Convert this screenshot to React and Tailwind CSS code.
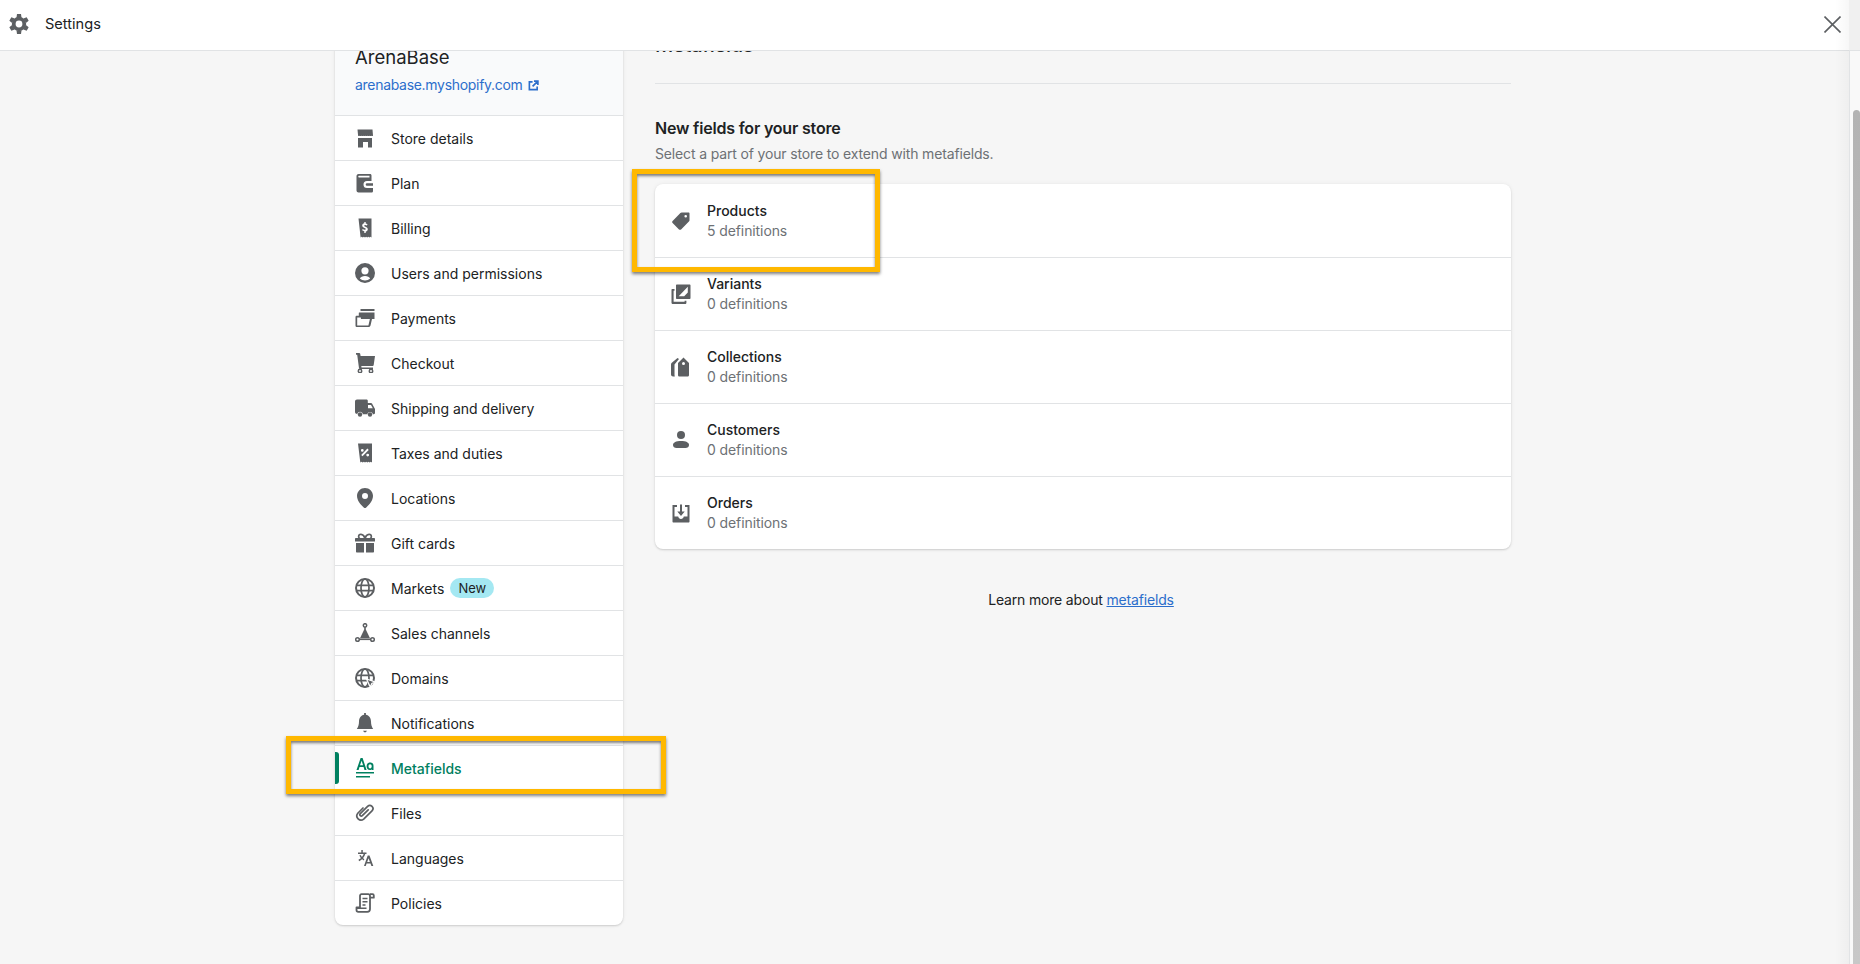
const ICONS = {
  gear: (
    <>
      <circle cx="10" cy="10" r="5.300" fill="none" stroke="currentColor" strokeWidth="3.800" />
      <path d="M8 0h4l.5 3.500h-5zM8 20h4l.5-3.500h-5z" />
      <path d="M8 0h4l.5 3.500h-5zM8 20h4l.5-3.500h-5z" transform="rotate(60 10 10)" />
      <path d="M8 0h4l.5 3.500h-5zM8 20h4l.5-3.500h-5z" transform="rotate(120 10 10)" />
    </>
  ),
  store: (
    <>
      <path d="M2.500 1.500h15l.5 6.200c-.6.5-1.100.5-1.600 0-.6.5-1.300.5-1.900 0-.6.5-1.300.5-1.900 0-.7.5-1.400.5-2.100 0-.7.5-1.300.5-2 0-.6.5-1.300.5-1.900 0-.6.5-1.200.5-1.900 0-.5.5-1 .5-1.600 0z" />
      <path d="M3 10h14v9.500h-4V14H8v5.500H3z" />
    </>
  ),
  wallet: (
    <path fillRule="evenodd" d="M3.500 1H15c1 0 1.500.7 1.500 1.600V8H12a3.500 3.500 0 0 0 0 7h6v3c0 1-.7 1.500-1.500 1.500h-13c-1 0-2-.8-2-2V3c0-1.200 1-2 2-2zM4 2.800c-1 0-1 1.800 0 1.800h10.500V2.800zM12 10.200h6v2.600h-6a1.300 1.300 0 0 1 0-2.600z" />
  ),
  billing: (
    <path fillRule="evenodd" d="M3.500.5h13v19l-1.100-.8-1 .8-1.100-.8-1.100.8-1.100-.8-1.100.8-1.100-.8-1.100.8-1.100-.8-1.100.8zM9.300 4v1.200C8 5.500 7.200 6.400 7.200 7.500c0 1.300 1 2 2.300 2.400 1 .3 1.300.6 1.300 1 0 .5-.5.8-1.100.8-.7 0-1.400-.3-2-.7l-.6 1.300c.6.5 1.300.8 2.200.9V15h1.400v-1.300c1.300-.3 2.100-1.200 2.100-2.400 0-1.300-.9-2-2.300-2.500-1-.3-1.300-.6-1.300-1s.4-.7 1-.7 1.200.2 1.700.5l.6-1.300c-.6-.4-1.200-.6-1.800-.7V4z" />
  ),
  user: (
    <path fillRule="evenodd" d="M10 0a10 10 0 1 1 0 20 10 10 0 0 1 0-20zm0 4.200a3.600 3.600 0 1 0 0 7.200 3.600 3.600 0 0 0 0-7.200zm0 8.800c-2.500 0-4.400 1-5.200 2.600A7.600 7.600 0 0 0 10 17.600a7.600 7.600 0 0 0 5.200-2c-.8-1.600-2.700-2.600-5.200-2.600z" />
  ),
  payments: (
    <>
      <path d="M5.500 1h14v2h-14z" />
      <path fillRule="evenodd" d="M4 4.500h15.500v6.500H17l-1.500 6.500c-.2.9-1 1.500-1.800 1.500H2c-.9 0-1.500-.7-1.500-1.600V9.200C.5 8.300 1 7.800 2 7.800h1.800V5.500c0-.6.100-1 .2-1zM2.200 9.500v8h11.200l1.500-6.500h-9V9.500z" />
    </>
  ),
  cart: (
    <>
      <path d="M1 0h3.200c.5 0 .9.3 1 .8L5.600 3H20l-1.300 9c-.1.5-.5.9-1 .9H6.300l.2 1.500H18v1.700H5c-.5 0-.9-.3-1-.8L2.200 1.700H1z" />
      <circle cx="5" cy="18" r="1.700" fill="none" stroke="currentColor" strokeWidth="1.500" />
      <circle cx="16" cy="18" r="1.700" fill="none" stroke="currentColor" strokeWidth="1.500" />
    </>
  ),
  truck: (
    <>
      <path fillRule="evenodd" d="M2 1.500h9.500c.8 0 1.300.6 1.300 1.300V5H16c.5 0 .8.2 1 .6l3 5.400V15c0 .7-.5 1.200-1.200 1.200H18a3 3 0 0 0-5.800 0H8A3 3 0 0 0 2.200 16C1 16 0 15.200 0 14V3.500c0-1.200.9-2 2-2zM13 7v3.300h4.800L16 7z" />
      <circle cx="5" cy="16.500" r="2.200" />
      <circle cx="15" cy="16.500" r="2.200" />
    </>
  ),
  taxes: (
    <path fillRule="evenodd" d="M3 .5h14v19l-1.200-.8-1.100.8-1.200-.8-1.100.8-1.200-.8-1.200.8-1.100-.8-1.200.8-1.200-.8-1.200.8zM12.400 5.600 6.200 12l1.300 1.300 6.200-6.400zM7.300 6a1.400 1.400 0 1 0 0 2.800 1.400 1.400 0 0 0 0-2.800zm5.400 4.700a1.400 1.400 0 1 0 0 2.800 1.400 1.400 0 0 0 0-2.800z" />
  ),
  pin: (
    <path fillRule="evenodd" d="M10 0c4.400 0 8 3.400 8 7.800 0 4.700-3.800 9.300-7 11.900-.6.4-1.400.4-2 0-3.200-2.600-7-7.200-7-11.900C2 3.400 5.600 0 10 0zm0 5a3 3 0 1 0 0 6 3 3 0 0 0 0-6z" />
  ),
  gift: (
    <>
      <path fillRule="evenodd" d="M5.800.5c1.700 0 3.200.9 4.200 2.400C11 1.400 12.500.5 14.200.5c1.800 0 3 1.200 3 2.900 0 .6-.2 1.200-.5 1.600H19c.6 0 1 .4 1 1v2.500H0V6c0-.6.4-1 1-1h2.300c-.3-.4-.5-1-.5-1.600C2.800 1.700 4 .5 5.800.5zm0 1.700c-.8 0-1.300.5-1.300 1.200 0 .9.700 1.600 1.600 1.600h2.700c-.4-1.500-1.600-2.800-3-2.800zm8.400 0c-1.400 0-2.600 1.300-3 2.800h2.700c.9 0 1.600-.7 1.600-1.600 0-.7-.5-1.200-1.300-1.200z" />
      <path d="M1 10h8v9.500H2c-.6 0-1-.4-1-1zM11 10h8v8.500c0 .6-.4 1-1 1h-7z" />
    </>
  ),
  globe: (
    <>
      <circle cx="10" cy="10" r="9" fill="none" stroke="currentColor" strokeWidth="2" />
      <ellipse cx="10" cy="10" rx="4" ry="9" fill="none" stroke="currentColor" strokeWidth="1.700" />
      <path d="M1 6.600h18v1.700H1zM1 11.700h18v1.700H1z" />
    </>
  ),
  channels: (
    <>
      <circle cx="10" cy="2.400" r="1.700" fill="none" stroke="currentColor" strokeWidth="1.500" />
      <circle cx="2.500" cy="16.500" r="1.800" fill="none" stroke="currentColor" strokeWidth="1.500" />
      <circle cx="17.500" cy="16.500" r="1.800" fill="none" stroke="currentColor" strokeWidth="1.500" />
      <path d="M9.200 4h1.600v2.600L15 15.200h-10L9.200 6.600z" />
      <path d="M4 15.500h12v1.600H4z" />
    </>
  ),
  domains: (
    <>
      <circle cx="10" cy="10" r="9" fill="none" stroke="currentColor" strokeWidth="2" />
      <ellipse cx="10" cy="10" rx="4" ry="9" fill="none" stroke="currentColor" strokeWidth="1.700" />
      <path d="M1 6.600h18v1.700H1zM1 11.700h12v1.700H1z" />
      <path d="M11.500 11 20 14l-3.200 1.500-1.500 3.500z" stroke="#fff" strokeWidth="1.200" />
    </>
  ),
  bell: (
    <>
      <path d="M9.100 0h1.800v1.700C14 2.200 16 5 16 8.500c0 3.500.8 5.300 2.200 7.500H1.800C3.200 13.800 4 12 4 8.500 4 5 6 2.200 9.100 1.700z" />
      <path d="M8 17.800h4l-1.200 1.500H9.200z" />
    </>
  ),
  metafields: (
    <>
      <path fillRule="evenodd" d="M5.600 0h2l4 12H9.500l-.9-3H4.500l-.9 3H1.500zM6.600 2.700 5 7.300h3.100z" />
      <path fillRule="evenodd" d="M15 4.500c2.200 0 3.500 1.200 3.500 3.200V12h-1.700v-.8c-.5.600-1.200.9-2 .9-1.900 0-3.200-1.600-3.200-3.800s1.300-3.800 3.400-3.800zm.1 1.700c-1 0-1.600.8-1.600 2.100s.6 2.100 1.600 2.100 1.600-.8 1.600-2.100-.6-2.100-1.600-2.100z" />
      <path d="M1 14h18v1.600H1zM1 18h14v1.600H1z" />
    </>
  ),
  clip: (
    <path
      fill="none"
      stroke="currentColor"
      strokeWidth="1.700"
      strokeLinecap="round"
      d="M13.200 6.800 7.300 12.700a1.400 1.400 0 0 1-2-2L12.600 3.400a3.100 3.100 0 0 1 4.400 4.400L8.700 16.100a4.200 4.200 0 0 1-5.900-5.900L8 5"
    />
  ),
  languages: (
    <>
      <path d="M3 4.500h8.500v1.400H3zM6.300 2h1.500v2.600H6.300z" />
      <path fill="none" stroke="currentColor" strokeWidth="1.500" d="M9.800 5c-.8 3-3 5.800-6 7.500M5 7.300c.8 2 2.300 3.600 4 4.500" />
      <path fillRule="evenodd" d="M12.700 7.500h1.800l3.800 10.500h-1.900l-.9-2.600h-3.900l-.9 2.600H9zm.9 2.800-1.400 3.600h2.700z" />
    </>
  ),
  policies: (
    <>
      <path
        fill="none"
        stroke="currentColor"
        strokeWidth="1.800"
        strokeLinejoin="round"
        d="M15 15.500V3c0-1-.7-1.800-1.800-1.800H6.500C5.500 1.200 5 2 5 3v11.500H1.500v2.500c0 1 .8 1.800 1.800 1.800h9c1.500 0 2.700-1.200 2.700-2.800v-.5M15 1.200h2.500c.7 0 1.300.6 1.300 1.300v2.200H15"
      />
      <path d="M7.500 4.800h5v1.500h-5zM7.500 8h5v1.500h-5zM7.500 11.200h3v1.500h-3zM2 14.500h9.500v1.500H2z" />
    </>
  ),
  tag: (
    <path fillRule="evenodd" d="M18.500 2.500v6.800c0 .5-.2.900-.6 1.300l-7.800 7.800c-.6.600-1.500.6-2.100 0L1.600 12c-.6-.6-.6-1.500 0-2.100l7.800-7.800c.4-.4.800-.6 1.300-.6h6.800c.6 0 1 .4 1 1zM14.700 4a1.300 1.300 0 1 0 0 2.600 1.300 1.300 0 0 0 0-2.600z" />
  ),
  variants: (
    <>
      <path fillRule="evenodd" d="M6 .5h12.500c.6 0 1 .4 1 1V14c0 .6-.4 1-1 1H6c-.6 0-1-.4-1-1V1.500c0-.6.400-1 1-1zm10.800 2.200L7.700 12.300h5.500l3.600-3.800z" />
      <path d="M1 5h2.500v1.700h-.9v11h11v-1h1.800v2c0 .7-.5 1.300-1.300 1.300H2C1.200 20 .5 19.500.5 18.700V6c0-.6.200-1 .5-1z" />
    </>
  ),
  collections: (
    <>
      <path fillRule="evenodd" d="M12.500.5 18 6V18c0 1-.8 1.500-1.500 1.500h-8C7.800 19.500 7 19 7 18V6zm0 4.500a1.500 1.500 0 1 0 0 3 1.500 1.500 0 0 0 0-3z" />
      <path d="M6.500 1 8 2 3.500 7.500v10c0 .5.100 1 .3 2H2C1 19.500 0 18.500 0 17.500v-10c0-.6.200-1 .5-1.400z" />
    </>
  ),
  person: (
    <>
      <circle cx="10" cy="5" r="4" />
      <path d="M10 11c5 0 8 1.500 8 4 0 2-1.500 3-3.500 3h-9C3.500 18 2 17 2 15c0-2.500 3-4 8-4z" />
    </>
  ),
  orders: (
    <path fillRule="evenodd" d="M1.500 2h4.500v2H3.500v9.500h3.700c.3 1.500 1.400 2.500 2.800 2.500s2.500-1 2.800-2.500h3.700V4H14V2h4.500v16.500c0 .6-.4 1-1 1h-15c-.6 0-1-.4-1-1zM9 1.500h2v7h2.700L10 13 6.300 8.500H9z" />
  ),
};

function Icon({ name, className = "text-[#5c5f62]" }) {
  return (
    <svg viewBox="0 0 20 20" fill="currentColor" className={`w-5 h-5 shrink-0 ${className}`}>
      {ICONS[name]}
    </svg>
  );
}

const NAV = [
  { label: "Store details", icon: "store" },
  { label: "Plan", icon: "wallet" },
  { label: "Billing", icon: "billing" },
  { label: "Users and permissions", icon: "user" },
  { label: "Payments", icon: "payments" },
  { label: "Checkout", icon: "cart" },
  { label: "Shipping and delivery", icon: "truck" },
  { label: "Taxes and duties", icon: "taxes" },
  { label: "Locations", icon: "pin" },
  { label: "Gift cards", icon: "gift" },
  { label: "Markets", icon: "globe", badge: "New" },
  { label: "Sales channels", icon: "channels" },
  { label: "Domains", icon: "domains" },
  { label: "Notifications", icon: "bell" },
  { label: "Metafields", icon: "metafields", active: true },
  { label: "Files", icon: "clip" },
  { label: "Languages", icon: "languages" },
  { label: "Policies", icon: "policies" },
];

const FIELDS = [
  { label: "Products", count: "5 definitions", icon: "tag" },
  { label: "Variants", count: "0 definitions", icon: "variants" },
  { label: "Collections", count: "0 definitions", icon: "collections" },
  { label: "Customers", count: "0 definitions", icon: "person" },
  { label: "Orders", count: "0 definitions", icon: "orders" },
];

function NavRow({ item }) {
  return (
    <div className="relative flex items-center h-[45px] pl-5 gap-4 border-t border-[#e1e3e5]">
      {item.active && (
        <div className="absolute left-0 top-[6px] w-[4px] h-[32px] rounded-r-[3px] bg-[#008060]" />
      )}
      <Icon name={item.icon} className={item.active ? "text-[#008060]" : "text-[#5c5f62]"} />
      <span className={`pt-px ${item.active ? "font-medium text-[#008060]" : "text-[#202223]"}`}>
        {item.label}
      </span>
      {item.badge && (
        <span className="-ml-[10px] h-5 px-2 rounded-full bg-[#a4e8f2] text-[13px] leading-5 text-[#202223]">
          {item.badge}
        </span>
      )}
    </div>
  );
}

export default function App() {
  return (
    <div className="relative h-[964px] overflow-hidden flex flex-col bg-[#f6f6f6] text-sm text-[#202223] font-['Inter',sans-serif]">
      <header className="relative z-10 shrink-0 h-[51px] flex items-center justify-between bg-white border-b border-[#e1e3e5] pl-[9px] pr-[19px]">
        <div className="flex items-center gap-[16px] -mt-[2px]">
          <Icon name="gear" />
          <span className="text-[14.6px]">Settings</span>
        </div>
        <svg
          viewBox="0 0 17 17"
          className="w-[17px] h-[17px] -mt-[2px] text-[#5c5f62]"
          fill="none"
          stroke="currentColor"
          strokeWidth="1.600"
        >
          <path d="M.5.5l16 16M16.500.5l-16 16" />
        </svg>
      </header>

      <div className="flex-1 flex justify-between min-h-0">
        <main className="flex items-start gap-[32px] pl-[335px] -mt-[13px]">
          <aside className="w-[288px] shrink-0 bg-white rounded-b-lg shadow-[0_0_5px_rgba(23,24,24,0.05),0_1px_2px_rgba(0,0,0,0.15)]">
            <div className="h-[77px] pl-5 pt-[8px] bg-[#f9fafb]">
              <div className="text-[18.500px] leading-[22px]">ArenaBase</div>
              <a className="mt-[7px] flex items-center gap-[5px] text-[#2c6ecb] tracking-[-0.3px]">
                arenabase.myshopify.com
                <svg viewBox="0 0 12 12" className="w-[11px] h-[11px]" fill="none" stroke="currentColor" strokeWidth="1.800">
                  <path d="M5 2H1.500v8.500H10V7M6.500 1.200h4.300v4.300M10.500 1.500 5 7" />
                </svg>
              </a>
            </div>
            {NAV.map((item) => (
              <NavRow key={item.label} item={item} />
            ))}
          </aside>

          <section className="w-[856px] shrink-0">
            <div className="-mt-[5px] h-[51px] border-b border-[#e1e3e5] text-xl font-medium leading-6 tracking-[-0.25px]">
              Metafields
            </div>
            <h2 className="mt-[32px] text-base font-semibold leading-6 tracking-[-0.19px]">New fields for your store</h2>
            <p className="mt-[4px] text-[#6d7175] leading-5 tracking-[-0.15px]">
              Select a part of your store to extend with metafields.
            </p>
            <div className="mt-[20px] bg-white rounded-lg shadow-[0_0_5px_rgba(23,24,24,0.05),0_1px_2px_rgba(0,0,0,0.15)]">
              {FIELDS.map((f, i) => (
                <div
                  key={f.label}
                  className={`flex items-center h-[73px] pl-4 gap-[16px] ${i > 0 ? "border-t border-[#e1e3e5]" : ""}`}
                >
                  <Icon name={f.icon} />
                  <div>
                    <div className="font-medium leading-5">{f.label}</div>
                    <div className="text-[#6d7175] leading-5 tracking-[-0.1px]">{f.count}</div>
                  </div>
                </div>
              ))}
            </div>
            <p className="mt-[41px] pr-[4px] text-center leading-5 tracking-[-0.17px]">
              Learn more about <a className="text-[#2c6ecb] underline">metafields</a>
            </p>
          </section>
        </main>

        <div className="w-[11px] shrink-0 flex flex-col border-l border-[#e1e3e5] bg-[#f9f9f9] pl-[3px]">
          <div className="mt-[59px] flex-1 rounded-t-[4px] bg-gradient-to-b from-[#b3b3b3] to-[#c8c8c8]" />
        </div>
      </div>

      {/* fade beside the scrollbar, over the header too */}
      <div className="absolute z-20 right-[11px] top-0 bottom-0 w-[14px] bg-gradient-to-r from-transparent to-[rgba(0,0,0,0.03)]" />
      <div className="absolute z-20 right-0 top-0 w-[11px] h-[50px] bg-[#f0f0f0]" />

      {/* yellow annotation boxes */}
      <div className="absolute z-20 left-[286px] top-[736px] w-[380px] h-[58px] border-[5px] border-[#ffb800] shadow-[0_2px_3px_rgba(0,0,0,0.5),inset_0_2px_3px_rgba(0,0,0,0.5)]" />
      <div className="absolute z-20 left-[632px] top-[169px] w-[248px] h-[103px] border-[5px] border-[#ffb800] shadow-[0_2px_3px_rgba(0,0,0,0.5),inset_0_2px_3px_rgba(0,0,0,0.5)]" />
    </div>
  );
}
